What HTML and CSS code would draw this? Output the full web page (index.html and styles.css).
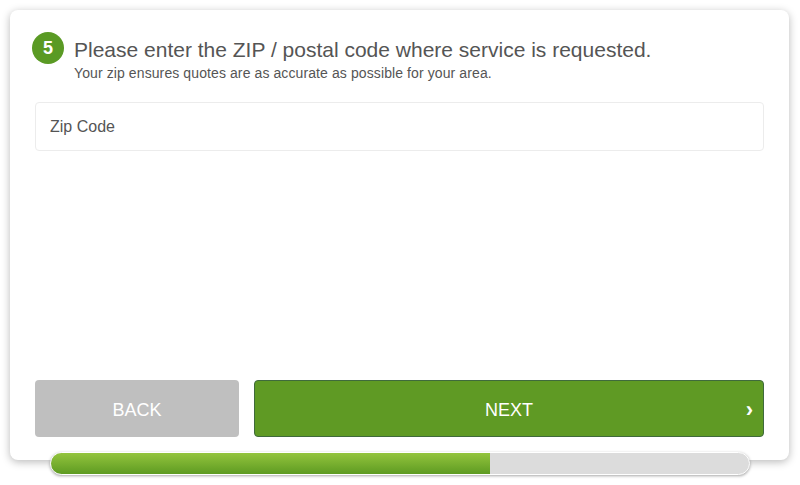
FILE: index.html
```html
<!DOCTYPE html>
<html lang="en">
<head>
    <meta charset="UTF-8" />
    <title>Get Quotes - Step 5</title>
    <link rel="stylesheet" href="styles.css">
</head>
<body>
  <div class="wrap">
    <section class="card">
      <div class="question">
        <span class="step">5</span>
        <div class="question-text">
          <h2>Please enter the ZIP / postal code where service is requested.</h2>
          <p>Your zip ensures quotes are as accurate as possible for your area.</p>
        </div>
      </div>

      <input class="zip" type="text" placeholder="Zip Code" />

      <div class="actions">
        <button class="btn back">BACK</button>
        <button class="btn next">NEXT <span class="chev">&rsaquo;</span></button>
      </div>
    </section>

    <div class="progress">
      <div class="progress-fill" style="width: 63%"></div>
    </div>
  </div>
</body>
</html>
```

FILE: styles.css
```css
* {
    margin: 0;
    padding: 0;
    box-sizing: border-box;
}

body {
    font-family: 'Liberation Sans', Arial, sans-serif;
    background: #fff;
    color: #555;
    padding: 10px 11px 10px 10px;
}

.wrap {
    display: flex;
    flex-direction: column;
    align-items: center;
}

.card {
    width: 100%;
    height: 450px;
    background: #fff;
    border-radius: 8px;
    box-shadow: 0 2px 8px rgba(0, 0, 0, 0.28);
    padding: 22px 25px 0 25px;
    display: flex;
    flex-direction: column;
}

.question {
    display: flex;
    align-items: flex-start;
    gap: 10px;
    margin-left: -3px;
}

.step {
    flex: none;
    width: 32px;
    height: 32px;
    border-radius: 50%;
    background: #5a9a24;
    color: #fff;
    font-size: 18px;
    font-weight: bold;
    display: flex;
    align-items: center;
    justify-content: center;
}

.question-text h2 {
    font-size: 21px;
    font-weight: normal;
    color: #555;
    line-height: 24px;
    margin-top: 6px;
}

.question-text p {
    font-size: 14px;
    letter-spacing: 0.1px;
    color: #555;
    line-height: 18px;
    margin-top: 2px;
}

.zip {
    margin-top: 20px;
    height: 49px;
    width: 100%;
    border: 1px solid #ececec;
    border-radius: 4px;
    padding: 0 14px;
    font-family: 'Liberation Sans', Arial, sans-serif;
    font-size: 16px;
    color: #555;
    outline: none;
}

    .zip::placeholder {
        color: #555;
    }

.actions {
    margin-top: auto;
    margin-bottom: 23px;
    display: flex;
    gap: 15px;
}

.btn {
    height: 57px;
    border-radius: 4px;
    border: none;
    padding-top: 3px;
    color: #fff;
    font-family: 'Liberation Sans', Arial, sans-serif;
    font-size: 18px;
    cursor: pointer;
}

.back {
    width: 204px;
    background: #bfbfbf;
}

.next {
    flex: 1;
    position: relative;
    background: #5f9a24;
    border: 1px solid #3f6a3c;
}

    .next .chev {
        position: absolute;
        right: 10px;
        top: 50%;
        transform: translateY(-45%);
        font-size: 22px;
        font-weight: bold;
    }

.progress {
    position: relative;
    margin-top: -8px;
    width: 700px;
    height: 23px;
    border-radius: 12px;
    background: #dcdcdc;
    border: 1px solid #fff;
    box-shadow: 0 1px 3px rgba(0, 0, 0, 0.35);
    overflow: hidden;
}

.progress-fill {
    height: 100%;
    background: linear-gradient(#93c43d, #5e9b22);
}
```
